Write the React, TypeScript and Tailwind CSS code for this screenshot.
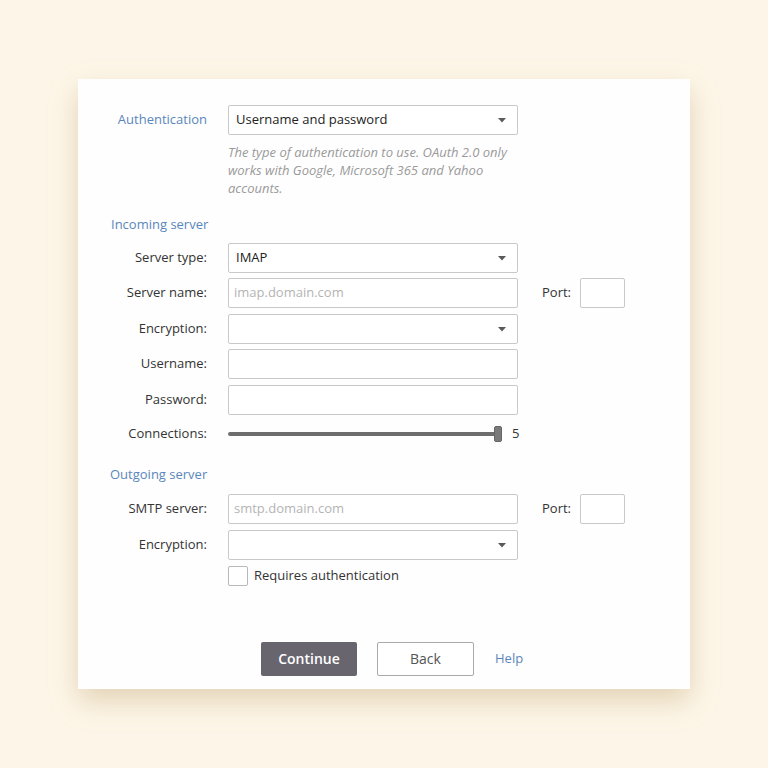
import React from "react";

const font = { fontFamily: '"Open Sans", "Liberation Sans", sans-serif' };

function Arrow() {
  return (
    <svg width="8" height="5" viewBox="0 0 8 5" className="absolute right-[11px] top-[12px]">
      <path d="M0 0 L8 0 L4 4.5 Z" fill="#5a5a5a" />
    </svg>
  );
}

function Select({ value }: { value?: string }) {
  return (
    <div className="relative w-[290px] h-[30px] border border-[#c9c9c9] rounded-[2px] bg-white flex items-center pl-[7px] text-[13px] text-[#222]">
      {value}
      <Arrow />
    </div>
  );
}

function Input({ placeholder }: { placeholder?: string }) {
  return (
    <div className="w-[290px] h-[30px] border border-[#c9c9c9] rounded-[2px] bg-white flex items-center pl-[5px] text-[13px] text-[#b4b4b4]">
      {placeholder}
    </div>
  );
}

function Row({ label, children, extra }: { label: string; children: React.ReactNode; extra?: React.ReactNode }) {
  return (
    <div className="flex items-center mt-[5.5px]">
      <div className="w-[150px] shrink-0 pr-[21px] text-right text-[13px] text-[#333]">{label}</div>
      {children}
      {extra}
    </div>
  );
}

function Port() {
  return (
    <div className="flex items-center ml-[24px]">
      <span className="text-[13px] text-[#333]">Port:</span>
      <div className="ml-[9px] w-[45px] h-[30px] border border-[#c9c9c9] rounded-[2px] bg-white" />
    </div>
  );
}

export default function App() {
  return (
    <div className="w-[768px] h-[768px] bg-[#fdf6e8] pt-[79px] pl-[78px]" style={font}>
      <div className="w-[612px] h-[610px] bg-[#fefefe] shadow-[0_12px_26px_rgba(190,160,110,0.4)] pt-[26px] flex flex-col">
        <div className="flex items-center">
          <div className="w-[150px] shrink-0 pr-[21px] text-right text-[13px] text-[#5a87bb]">Authentication</div>
          <Select value="Username and password" />
        </div>
        <div className="ml-[150px] mt-[8px] w-[292px] text-[13px] leading-[18px] italic text-[#9a9a9a]">
          The type of authentication to use. OAuth 2.0 only works with Google, Microsoft 365 and Yahoo accounts.
        </div>
        <div className="ml-[33px] mt-[18px] text-[13px] text-[#5a87bb] leading-[18px]">Incoming server</div>
        <div className="mt-[4px]">
          <Row label="Server type:"><Select value="IMAP" /></Row>
          <Row label="Server name:" extra={<Port />}><Input placeholder="imap.domain.com" /></Row>
          <Row label="Encryption:"><Select /></Row>
          <Row label="Username:"><Input /></Row>
          <Row label="Password:"><Input /></Row>
          <div className="flex items-center mt-[7px] h-[24px]">
            <div className="w-[150px] shrink-0 pr-[21px] text-right text-[13px] text-[#333]">Connections:</div>
            <div className="relative w-[274px] h-[16px] flex items-center">
              <div className="w-full h-[4px] bg-[#6e6e6e] rounded-[2px]" />
              <div className="absolute right-0 top-0 w-[8px] h-[16px] rounded-[2px] bg-[#7a7a7a] border border-[#666]" />
            </div>
            <span className="ml-[10px] text-[13px] text-[#333]">5</span>
          </div>
        </div>
        <div className="ml-[32px] mt-[19px] text-[13px] text-[#5a87bb] leading-[18px]">Outgoing server</div>
        <div className="mt-[6px]">
          <Row label="SMTP server:" extra={<Port />}><Input placeholder="smtp.domain.com" /></Row>
          <Row label="Encryption:"><Select /></Row>
          <div className="flex items-center ml-[150px] mt-[6px]">
            <div className="w-[20px] h-[20px] border border-[#b8b8b8] rounded-[2px] bg-white" />
            <span className="ml-[6px] text-[13px] text-[#333]">Requires authentication</span>
          </div>
        </div>
        <div className="flex items-center mt-[56px] ml-[183px]">
          <div className="w-[96px] h-[34px] bg-[#68656f] rounded-[2px] flex items-center justify-center text-[14px] text-white font-semibold">Continue</div>
          <div className="ml-[20px] w-[97px] h-[34px] border border-[#a9a9a9] rounded-[2px] bg-white flex items-center justify-center text-[14px] text-[#555]">Back</div>
          <span className="ml-[21px] text-[13px] text-[#5a87bb]">Help</span>
        </div>
      </div>
    </div>
  );
}
